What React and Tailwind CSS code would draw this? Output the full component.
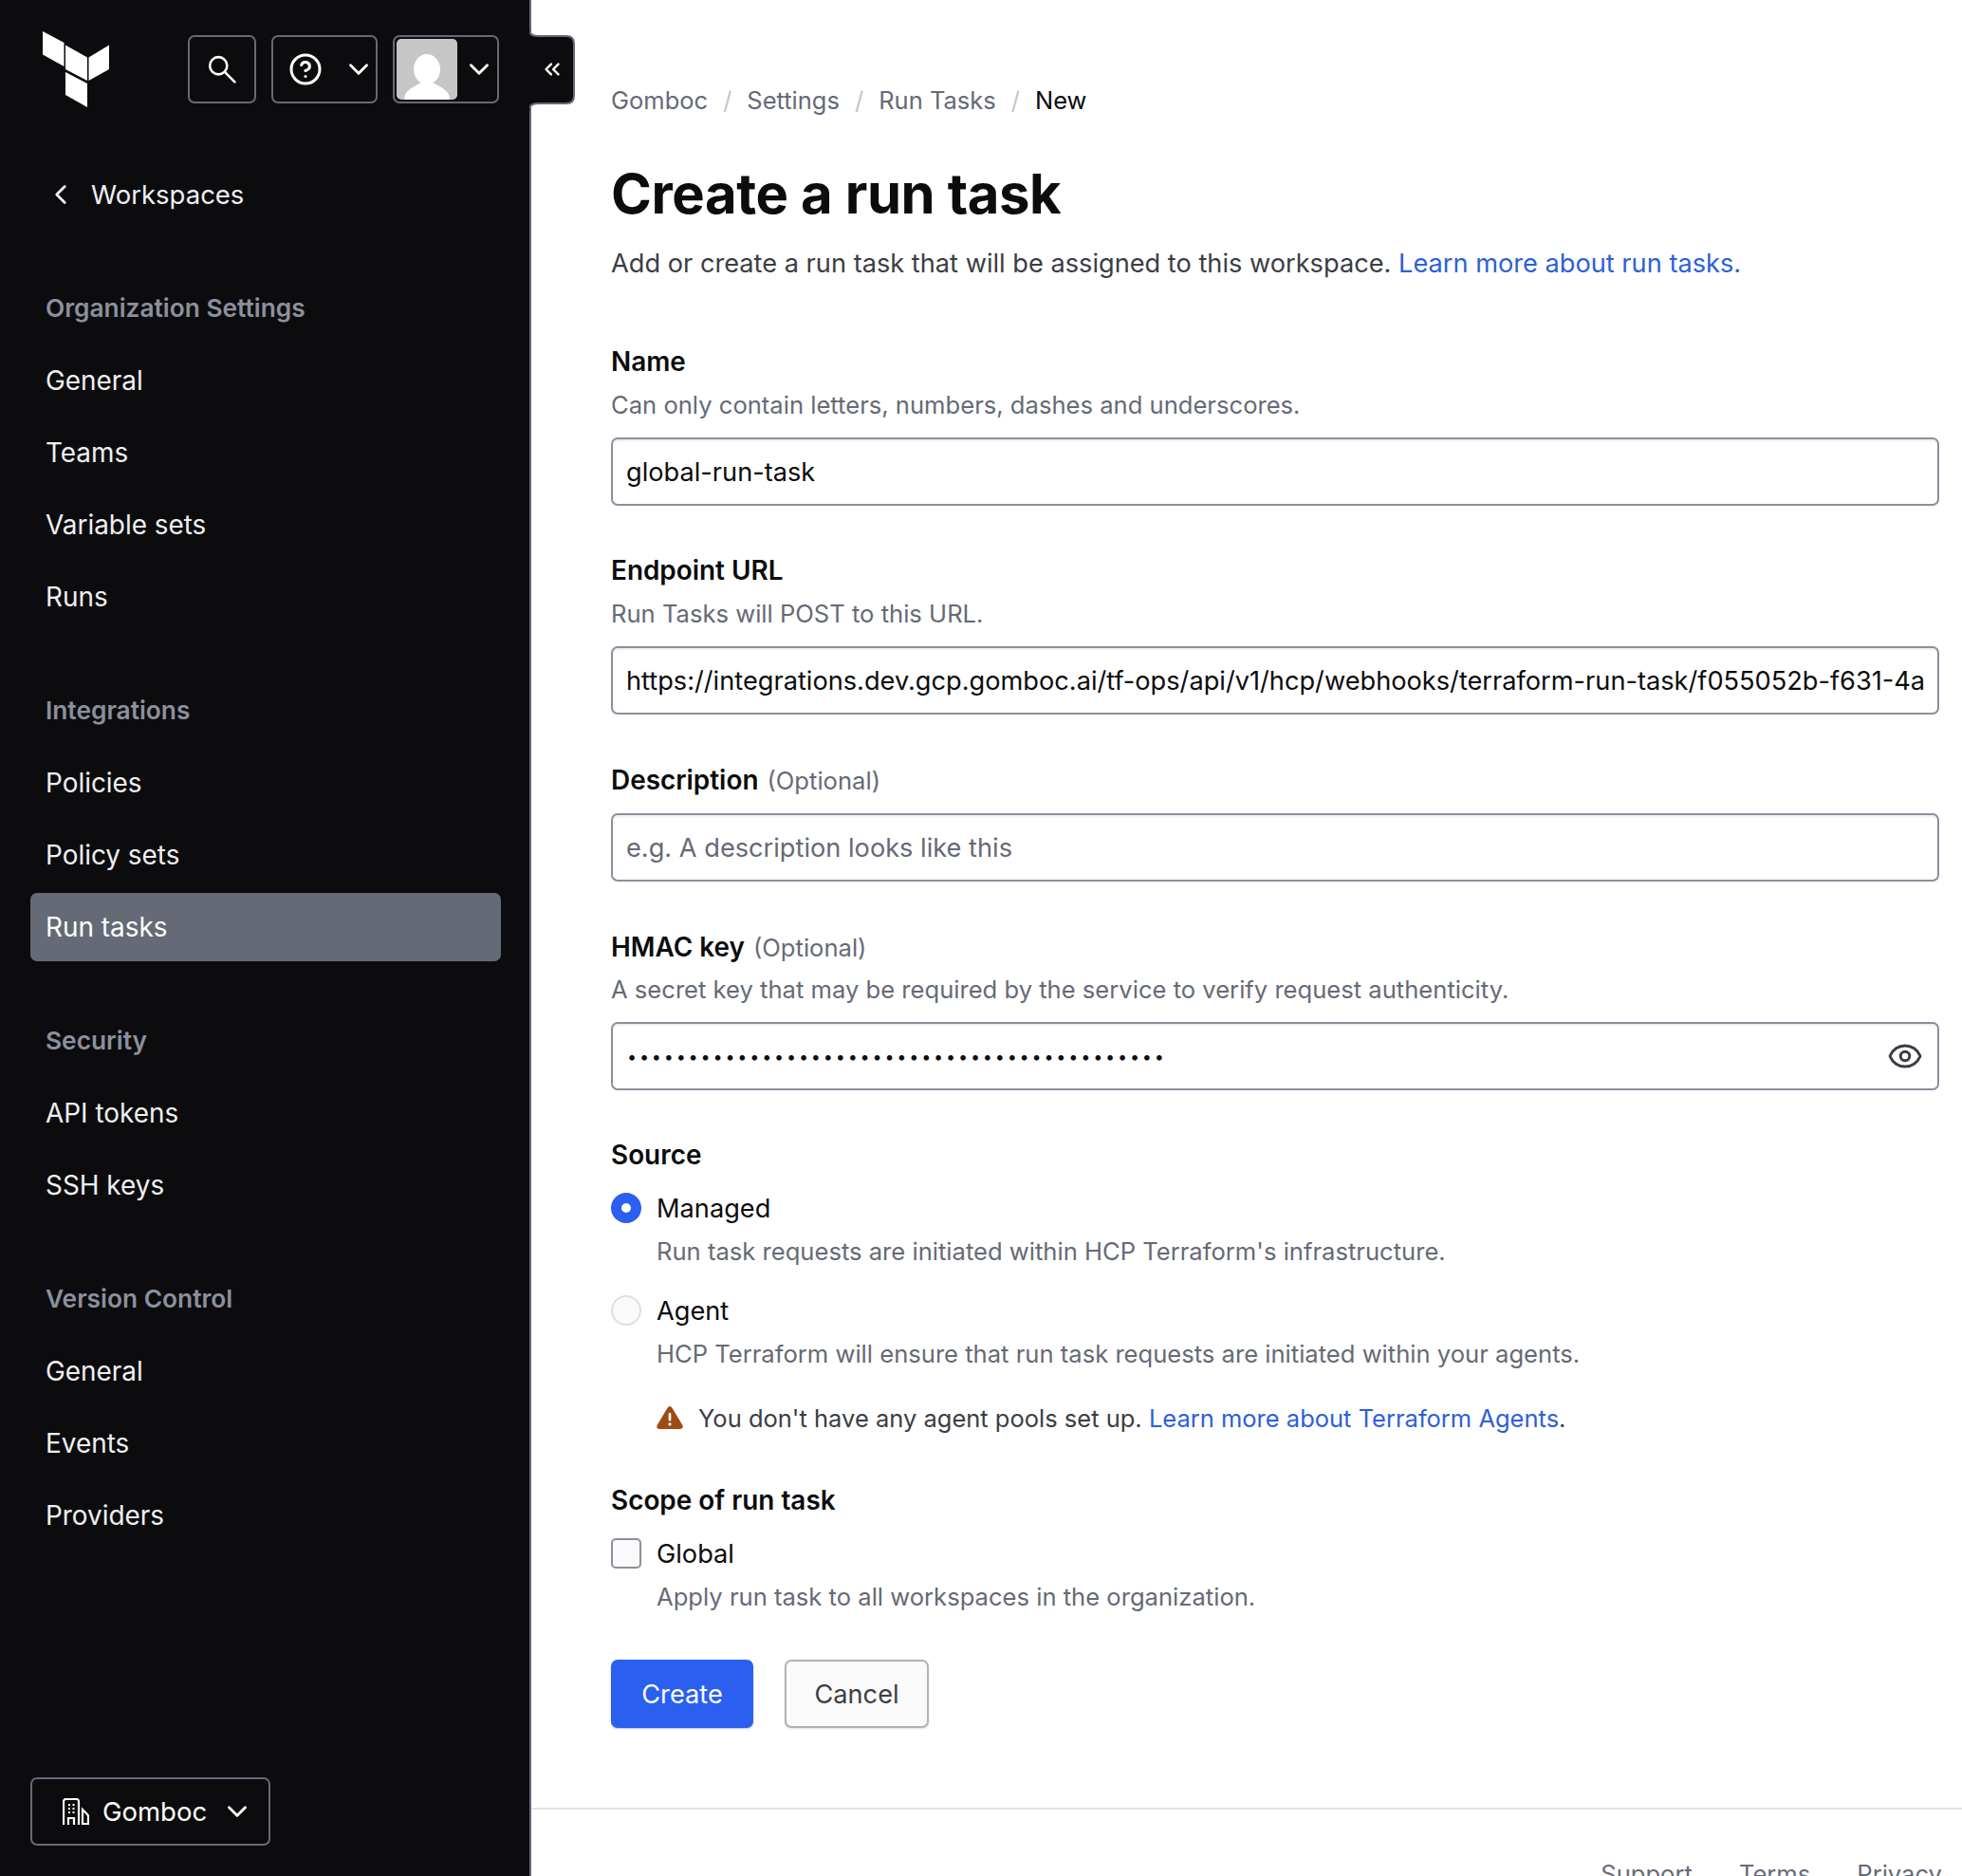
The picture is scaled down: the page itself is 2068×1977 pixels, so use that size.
import { ChevronDown, ChevronLeft, ChevronsLeft, CircleHelp, Eye } from 'lucide-react';

const sections = [
  { title: 'Organization Settings', items: ['General', 'Teams', 'Variable sets', 'Runs'] },
  { title: 'Integrations', items: ['Policies', 'Policy sets', 'Run tasks'] },
  { title: 'Security', items: ['API tokens', 'SSH keys'] },
  { title: 'Version Control', items: ['General', 'Events', 'Providers'] },
];

function Logo() {
  return (
    <svg viewBox="0 0 70 80" className="absolute left-[45px] top-[33px] h-[80px] w-[70px]" fill="#ffffff">
      <path d="M0 0 L22.5 12 V37 L0 24.5 Z" />
      <path d="M24 14.5 L47 27.5 V52 L24 40 Z" />
      <path d="M48.5 27.5 L70 14.5 V40 L48.5 52 Z" />
      <path d="M24 43 L47 55 V80 L24 67 Z" />
    </svg>
  );
}

function Avatar() {
  return (
    <svg viewBox="0 0 64 64" className="h-16 w-16 rounded-[5px]">
      <rect width="64" height="64" fill="#c6c6c6" />
      <ellipse cx="32" cy="32" rx="14" ry="16" fill="#ffffff" />
      <path d="M8 64 C8 56 14 52 26 46 H38 C50 52 56 56 56 64 Z" fill="#ffffff" />
    </svg>
  );
}

function SearchIcon() {
  return (
    <svg viewBox="0 0 28 28" className="h-[30px] w-[30px]" fill="none" stroke="#ffffff" strokeWidth="2.4" strokeLinecap="round">
      <circle cx="10.5" cy="10.5" r="8.5" />
      <path d="M17 17 L26.5 26.5" />
    </svg>
  );
}

function OrgIcon() {
  return (
    <svg viewBox="0 0 28 28" className="h-7 w-7" fill="none" stroke="#ffffff" strokeWidth="2.2">
      <path d="M1 28 V3.5 A2.5 2.5 0 0 1 3.5 1 H14 A2.5 2.5 0 0 1 17 3.5 V28" />
      <path d="M6 28 V21 H12 V28" />
      <path d="M21 12 L26 17 Q27 18 27 19.5 V27 H21 Z" />
      <path d="M6 7 H8 M10.5 7 H12.5 M6 11 H8 M10.5 11 H12.5 M6 15 H8 M10.5 15 H12.5" />
    </svg>
  );
}

function Sidebar() {
  return (
    <aside className="relative flex h-full w-[560px] shrink-0 flex-col border-r-2 border-[#656a76] bg-[#0c0c0e] text-[27.9px] text-[#efeff1]">
      <Logo />
      <div className="ml-[198px] mt-[37px] flex h-[72px] gap-4">
        <button className="flex w-[72px] items-center justify-center rounded-[7px] border-2 border-[#656a76]">
          <SearchIcon />
        </button>
        <button className="flex w-28 items-center justify-between rounded-[7px] border-2 border-[#656a76] pl-[16px] pr-[1px]">
          <CircleHelp size={36} strokeWidth={2} color="#ffffff" />
          <ChevronDown size={34} strokeWidth={2} color="#ffffff" />
        </button>
        <button className="flex w-28 items-center justify-between rounded-[7px] border-2 border-[#656a76] pl-[2px] pr-[2px]">
          <Avatar />
          <ChevronDown size={34} strokeWidth={2} color="#ffffff" />
        </button>
      </div>

      <a className="ml-[47px] mt-[76px] flex h-10 items-center gap-[15px] text-[27.5px] text-[#efeff1]">
        <ChevronLeft size={34} strokeWidth={2} color="#efeff1" />
        <span className="pt-[1px]">Workspaces</span>
      </a>

      <nav className="mt-[16px] pl-8 pr-[30px]">
        {sections.map((section) => (
          <div key={section.title} className="mt-[64px]">
            <div className="mb-5 flex h-10 items-center px-4 text-[26.3px] font-semibold text-[#8c909c]">{section.title}</div>
            <ul className="flex flex-col gap-1">
              {section.items.map((item) => (
                <li
                  key={section.title + item}
                  className={
                    item === 'Run tasks'
                      ? 'flex h-[72px] items-center rounded-[7px] bg-[#656a76] px-4 pt-[2px] text-white'
                      : 'flex h-[72px] items-center px-4 pt-[2px]'
                  }
                >
                  {item}
                </li>
              ))}
            </ul>
          </div>
        ))}
      </nav>

      <button className="absolute bottom-8 left-8 flex h-[72px] w-[253px] items-center rounded-[7px] border-2 border-[#656a76] pl-[32px] text-[27.5px] text-white">
        <OrgIcon />
        <span className="ml-[14px] pt-[2px]">Gomboc</span>
        <ChevronDown size={34} strokeWidth={2} className="ml-[15px]" color="#ffffff" />
      </button>

      <div className="absolute left-full top-[29px] h-[90px] w-12">
        <svg viewBox="0 0 48 90" className="h-[90px] w-12">
          <path d="M0 0 Q0 9 9 9 H39 Q47 9 47 17 V72 Q47 80 39 80 H9 Q0 80 0 89 Z" fill="#0c0c0e" />
          <path d="M-1 0 Q-1 9 9 9 H39 Q47 9 47 17 V72 Q47 80 39 80 H9 Q-1 80 -1 89" fill="none" stroke="#656a76" strokeWidth="2" />
        </svg>
        <ChevronsLeft size={26} strokeWidth={2.2} color="#ffffff" className="absolute left-[11px] top-[31px]" />
      </div>
    </aside>
  );
}

function Crumbs() {
  const parts = ['Gomboc', 'Settings', 'Run Tasks'];
  return (
    <div className="flex h-7 items-center text-[25.5px] text-[#656a76]">
      {parts.map((part) => (
        <span key={part} className="flex items-center">
          <span>{part}</span>
          <span className="mx-[16px] text-[#c2c5cb]">/</span>
        </span>
      ))}
      <span className="text-[#0c0c0e]">New</span>
    </div>
  );
}

const inputClass =
  'block h-[72px] w-full rounded-[7px] border-2 border-[#8c909c] bg-white px-[14px] text-[27.2px] text-[#0c0c0e] shadow-[inset_0_2px_2px_rgba(101,106,118,0.12)] outline-none placeholder:text-[#656a76]';

function Label({ children, optional, className }) {
  return (
    <div className={'flex h-7 items-center pt-[2px] text-[27.9px] font-semibold text-[#0c0c0e] ' + (className || '')}>
      {children}
      {optional && <span className="ml-[9px] text-[25.6px] font-normal text-[#656a76]">(Optional)</span>}
    </div>
  );
}

function Hint({ children, className }) {
  return <div className={'flex h-[26px] items-center text-[25.6px] text-[#656a76] ' + (className || '')}>{children}</div>;
}

function Form() {
  return (
    <form className="ml-[84px] mr-6">
      <Label className="mt-[75px]">Name</Label>
      <Hint className="mt-[19px]">Can only contain letters, numbers, dashes and underscores.</Hint>
      <input className={inputClass + ' mt-[21px]'} defaultValue="global-run-task" />

      <Label className="mt-[54px]">Endpoint URL</Label>
      <Hint className="mt-[19px]">Run Tasks will POST to this URL.</Hint>
      <input
        className={inputClass + ' mt-[21px]'}
        defaultValue="https://integrations.dev.gcp.gomboc.ai/tf-ops/api/v1/hcp/webhooks/terraform-run-task/f055052b-f631-4a27"
      />

      <Label className="mt-[55px]" optional>Description</Label>
      <input className={inputClass + ' mt-[21px]'} placeholder="e.g. A description looks like this" />

      <Label className="mt-[55px]" optional>HMAC key</Label>
      <Hint className="mt-[18px]">A secret key that may be required by the service to verify request authenticity.</Hint>
      <div className="relative mt-[21px]">
        <input
          type="password"
          className={inputClass + ' !pl-[15px] !text-[18px] tracking-[2.8px]'}
          defaultValue="abcdefghijklmnopqrstuvwxyzabcdefghijklmnopqr"
        />
        <Eye size={38} strokeWidth={1.9} color="#3b3d45" className="absolute right-[17px] top-[17px]" />
      </div>

      <Label className="mt-[54px]">Source</Label>
      <div className="mt-[26px] flex h-8 items-center">
        <span className="flex h-8 w-8 items-center justify-center rounded-full bg-[#2b5ff0]">
          <span className="h-[10px] w-[10px] rounded-full bg-white" />
        </span>
        <span className="ml-4 pt-[2px] text-[27.2px] text-[#0c0c0e]">Managed</span>
      </div>
      <Hint className="ml-12 mt-[17px]">Run task requests are initiated within HCP Terraform's infrastructure.</Hint>
      <div className="mt-[33px] flex h-8 items-center">
        <span className="h-8 w-8 rounded-full border-2 border-[#dedfe3] bg-[#fafafa]" />
        <span className="ml-4 pt-[2px] text-[27.2px] text-[#0c0c0e]">Agent</span>
      </div>
      <Hint className="ml-12 mt-[17px]">HCP Terraform will ensure that run task requests are initiated within your agents.</Hint>
      <div className="ml-12 mt-[40px] flex h-7 items-center text-[25.5px] text-[#3b3d45]">
        <svg viewBox="0 0 28 24" className="h-6 w-7">
          <path d="M14 0 Q15.5 0 16.5 1.8 L27.4 20 Q28.8 23.5 25 24 H3 Q-0.8 23.5 0.6 20 L11.5 1.8 Q12.5 0 14 0 Z" fill="#9e4b13" />
          <rect x="12.7" y="7" width="2.6" height="8.5" rx="1" fill="#ffffff" />
          <circle cx="14" cy="18.8" r="1.6" fill="#ffffff" />
        </svg>
        <span className="ml-[16px] pt-[2px]">
          You don't have any agent pools set up. <a className="text-[#2d5fd9]">Learn more about Terraform Agents</a>.
        </span>
      </div>

      <Label className="mt-[59px]">Scope of run task</Label>
      <div className="mt-[26px] flex h-8 items-center">
        <span className="h-8 w-8 rounded-[5px] border-2 border-[#8c909c] bg-[#fafafa]" />
        <span className="ml-4 pt-[2px] text-[27.2px] text-[#0c0c0e]">Global</span>
      </div>
      <Hint className="ml-12 mt-[17px]">Apply run task to all workspaces in the organization.</Hint>

      <div className="mt-[53px] flex gap-[33px]">
        <button type="button" className="h-[72px] w-[150px] rounded-[7px] bg-[#2b5ff0] pt-[3px] text-[27.2px] text-white shadow-[0_1px_2px_rgba(101,106,118,0.4)]">
          Create
        </button>
        <button type="button" className="h-[72px] w-[152px] rounded-[7px] border-2 border-[#b0b2b8] bg-[#fafafa] pt-[3px] text-[27.2px] text-[#3b3d45] shadow-[0_1px_2px_rgba(101,106,118,0.2)]">
          Cancel
        </button>
      </div>
    </form>
  );
}

export default function App() {
  return (
    <div className="flex h-[1977px] overflow-hidden bg-white font-['Inter',sans-serif]">
      <Sidebar />
      <main className="min-w-0 flex-1">
        <div className="ml-[84px] pt-[92px]">
          <Crumbs />
          <h1 className="mt-[52px] text-[58px] font-bold leading-[64px] tracking-[-0.4px] text-[#0c0c0e]">Create a run task</h1>
          <p className="mt-[26px] flex h-[30px] items-center pt-[2px] text-[27.2px] text-[#3b3d45]">
            Add or create a run task that will be assigned to this workspace.&nbsp;
            <a className="text-[#2d5fd9]">Learn more about run tasks.</a>
          </p>
        </div>
        <Form />
        <footer className="mt-[84px] border-t-2 border-[#e3e4e7] pt-[53px]">
          <div className="mr-[21px] flex justify-end gap-[49px] text-[25.6px] leading-[30px] text-[#656a76]">
            <a>Support</a>
            <a>Terms</a>
            <a>Privacy</a>
          </div>
        </footer>
      </main>
    </div>
  );
}
